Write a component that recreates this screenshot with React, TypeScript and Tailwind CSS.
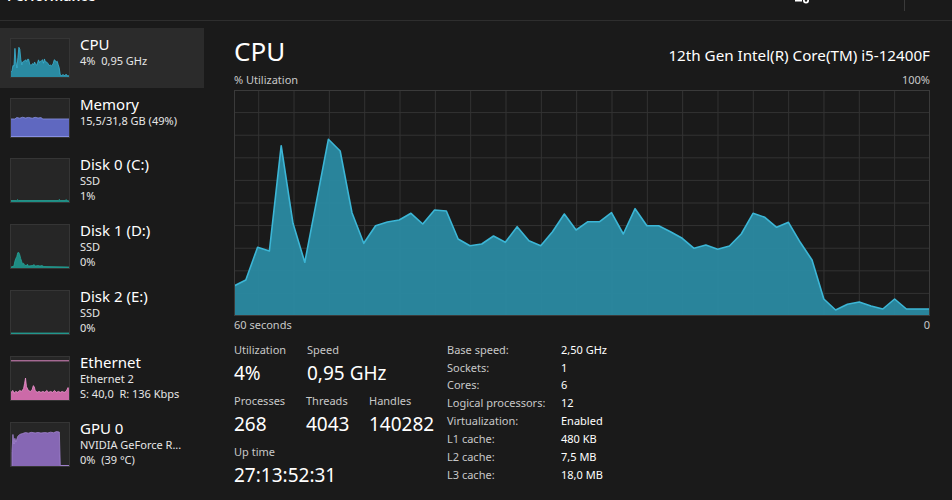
import type { ReactNode } from 'react';

const CHART_W = 696;
const CHART_H = 226;

// sampled from the screenshot, px from the chart top
const cpuSamples = [
  196, 190, 157.3, 161, 55.7, 133.3, 172.3, 110.8, 49.3, 61, 122.7, 153.3, 135.7, 132, 130, 123.3, 134, 120, 121,
  149, 155.7, 154, 146, 152.3, 136.7, 150.7, 155.7, 141.7, 124, 140, 131.7, 131.7, 122.7, 144, 118.7, 135.7, 135.7,
  141.7, 148.3, 158.3, 155, 159.3, 156, 144, 123.3, 127.3, 137.3, 132.3, 152.3, 170, 209, 220, 214.3, 212, 216, 219,
  209, 219, 219, 219,
];

function cpuPath(w: number, h: number) {
  const step = w / (cpuSamples.length - 1);
  const pts = cpuSamples.map((v, i) => `${(i * step).toFixed(2)},${((v / CHART_H) * h).toFixed(2)}`);
  return { line: pts.join(' '), area: `0,${h} ${pts.join(' ')} ${w},${h}` };
}

function CpuChart() {
  const { line, area } = cpuPath(CHART_W, CHART_H);
  const rows = Array.from({ length: 9 }, (_, i) => ((i + 1) * CHART_H) / 10);
  const cols = Array.from({ length: 19 }, (_, i) => 24.7 + i * 35.33);

  return (
    <svg width={CHART_W} height={CHART_H} viewBox={`0 0 ${CHART_W} ${CHART_H}`} className="block">
      {rows.map((y) => (
        <line key={`r${y}`} x1={0} x2={CHART_W} y1={y} y2={y} stroke="#333333" strokeWidth={1} />
      ))}
      {cols.map((x) => (
        <line key={`c${x}`} x1={x} x2={x} y1={0} y2={CHART_H} stroke="#333333" strokeWidth={1} />
      ))}
      <polygon points={area} fill="#2a8aa2" fillOpacity={0.95} />
      <polyline points={line} fill="none" stroke="#3cb6d6" strokeWidth={1.6} strokeLinejoin="round" />
      <rect x={0.5} y={0.5} width={CHART_W - 1} height={CHART_H - 1} fill="none" stroke="#3a3a3a" strokeWidth={1} />
    </svg>
  );
}

function Thumb({ h, children }: { h: number; children: ReactNode }) {
  return (
    <div className={`${h === 40 ? 'h-[40px]' : 'h-[45px]'} w-[60px] shrink-0 border border-[#353535] bg-[#262626]`}>
      <svg width="58" height={h - 2} viewBox={`0 0 60 ${h}`} preserveAspectRatio="none" className="block">
        {children}
      </svg>
    </div>
  );
}

function CpuThumb() {
  const { line, area } = cpuPath(60, 40);
  return (
    <Thumb h={40}>
      <polygon points={area} fill="#2a8aa2" />
      <polyline points={line} fill="none" stroke="#3cb6d6" strokeWidth={0.8} />
    </Thumb>
  );
}

function MemoryThumb() {
  return (
    <Thumb h={40}>
      <polygon
        points="0,40 0,21 4,21 6,19.5 9,20.2 12,19.2 15,20 18,19.4 22,20.2 25,19.3 28,20 31,19.6 33,21 60,21 60,40"
        fill="#5f68c0"
      />
      <polyline
        points="0,21 4,21 6,19.5 9,20.2 12,19.2 15,20 18,19.4 22,20.2 25,19.3 28,20 31,19.6 33,21 60,21"
        fill="none"
        stroke="#8b92e4"
        strokeWidth={0.8}
      />
      <line x1={0} x2={60} y1={39.5} y2={39.5} stroke="#8b92e4" strokeWidth={1} />
    </Thumb>
  );
}

function DiskThumb({ spikes }: { spikes: string }) {
  return (
    <Thumb h={45}>
      <polygon points={`0,45 ${spikes} 60,44 60,45`} fill="#1f8c84" />
      <polyline points={`${spikes} 60,44`} fill="none" stroke="#26a89c" strokeWidth={0.8} />
    </Thumb>
  );
}

function EthernetThumb() {
  const pts =
    '0,37 2,35 3,38 5,36 7,37 9,35 11,36 13,33 14,28 15,22 16,31 18,35 20,36 22,34 23,30 24,31 25,35 27,37 29,36 31,37 33,36 35,37 37,35 39,37 41,36 43,37 45,35 47,37 49,36 51,37 53,36 55,37 57,36 59,32 60,33';
  return (
    <Thumb h={45}>
      <line x1={0} x2={60} y1={4} y2={4} stroke="#e68bca" strokeWidth={1} />
      <polygon points={`0,45 ${pts} 60,45`} fill="#cc6aa8" />
      <polyline points={pts} fill="none" stroke="#f09ad2" strokeWidth={0.8} />
    </Thumb>
  );
}

function GpuThumb() {
  const pts =
    '1,45 1,30 2,12 3,22 4,16 5,20 7,14 9,12 12,11 15,10 18,10.6 21,9.8 25,10.4 28,9.9 31,10.5 35,10 38,10.4 41,9.6 44,10.2 47,9 50,9.5 51,45';
  return (
    <Thumb h={45}>
      <polygon points={pts} fill="#8667b4" />
      <polyline points={pts} fill="none" stroke="#a585d4" strokeWidth={0.8} />
      <line x1={51} x2={60} y1={44.5} y2={44.5} stroke="#a585d4" strokeWidth={1} />
    </Thumb>
  );
}

type SideItem = {
  title: string;
  lines: string[];
  thumb: ReactNode;
  selected?: boolean;
};

const sideItems: SideItem[] = [
  { title: 'CPU', lines: ['4%  0,95 GHz'], thumb: <CpuThumb />, selected: true },
  { title: 'Memory', lines: ['15,5/31,8 GB (49%)'], thumb: <MemoryThumb /> },
  {
    title: 'Disk 0 (C:)',
    lines: ['SSD', '1%'],
    thumb: <DiskThumb spikes="0,43.5 6,43.5 7,42.5 8,43.5 49,43.5 50,42.3 51,43.5 56,43.5 57,42.5 58,43.5" />,
  },
  {
    title: 'Disk 1 (D:)',
    lines: ['SSD', '0%'],
    thumb: (
      <DiskThumb spikes="0,44 3,43 4,38 5,35 6,33 7,29 8,28.7 9,31 10,35 11,38 12,41 13,40 14,42 16,42.5 17,41 18,43 22,42.5 24,41.5 25,43 28,42.5 30,43 32,42.5 34,43.5" />
    ),
  },
  { title: 'Disk 2 (E:)', lines: ['SSD', '0%'], thumb: <DiskThumb spikes="0,44" /> },
  { title: 'Ethernet', lines: ['Ethernet 2', 'S: 40,0  R: 136 Kbps'], thumb: <EthernetThumb /> },
  { title: 'GPU 0', lines: ['NVIDIA GeForce R...', '0%  (39 °C)'], thumb: <GpuThumb /> },
];

function Sidebar() {
  return (
    <aside className="flex w-[204px] shrink-0 flex-col pt-[7px]">
      {sideItems.map((item) => (
        <div
          key={item.title}
          className={`flex items-start pl-[10px] ${item.lines.length > 1 ? 'h-[66px]' : 'h-[60px]'} ${
            item.selected ? 'bg-[#2b2b2b]' : ''
          }`}
        >
          <div className="mt-[10px]">{item.thumb}</div>
          <div className="ml-[10px] flex flex-col pt-[7px] whitespace-pre">
            <span className="text-[15px] leading-[18px] text-white">{item.title}</span>
            {item.lines.map((l) => (
              <span key={l} className="text-[11px] leading-[15px] text-[#e6e6e6]">
                {l}
              </span>
            ))}
          </div>
        </div>
      ))}
    </aside>
  );
}

function Stat({ label, value, width }: { label: string; value: string; width: string }) {
  return (
    <div className={`flex flex-col ${width}`}>
      <span className="text-[11px] leading-[15px] text-[#c8c8c8]">{label}</span>
      <span className="mt-[4px] text-[19px] leading-[24px] text-white">{value}</span>
    </div>
  );
}

const specs: [string, string][] = [
  ['Base speed:', '2,50 GHz'],
  ['Sockets:', '1'],
  ['Cores:', '6'],
  ['Logical processors:', '12'],
  ['Virtualization:', 'Enabled'],
  ['L1 cache:', '480 KB'],
  ['L2 cache:', '7,5 MB'],
  ['L3 cache:', '18,0 MB'],
];

export default function App() {
  return (
    <div className="flex h-[500px] w-[952px] flex-col overflow-hidden bg-[#1a1a1a] font-['Noto_Sans',sans-serif] text-white">
      <header className="flex h-[21px] shrink-0 items-start overflow-hidden border-b border-[#2e2e2e]">
        <span className="ml-[7px] -mt-[13px] text-[14px] font-semibold leading-[18px]">Performance</span>
        <svg width="16" height="6" viewBox="0 0 16 6" className="ml-auto mr-[93px]">
          <rect x="0" y="0" width="7" height="1.5" fill="#ffffff" />
          <circle cx="11" cy="0.5" r="3" fill="#ffffff" />
          <circle cx="11" cy="0.5" r="1.2" fill="#1a1a1a" />
        </svg>
        <div className="h-[11px] w-px bg-[#3a3a3a]" />
        <div className="w-[47px]" />
      </header>

      <div className="flex min-h-0 flex-1">
        <Sidebar />

        <main className="flex min-w-0 flex-1 flex-col pl-[30px] pr-[22px]">
          <div className="mt-[12px] flex h-[36px] items-baseline justify-between">
            <span className="text-[26px] leading-[36px]">CPU</span>
            <span className="text-[15.2px] leading-[20px]">12th Gen Intel(R) Core(TM) i5-12400F</span>
          </div>
          <div className="mt-[3px] flex h-[16px] items-baseline justify-between text-[11px] leading-[16px] text-[#c8c8c8]">
            <span>% Utilization</span>
            <span>100%</span>
          </div>
          <div className="mt-[2px]">
            <CpuChart />
          </div>
          <div className="mt-[2px] flex justify-between text-[11px] leading-[14px] text-[#c8c8c8]">
            <span>60 seconds</span>
            <span>0</span>
          </div>

          <div className="mt-[9px] flex">
            <div className="flex w-[213px] shrink-0 flex-col gap-[8px] pt-[1px]">
              <div className="flex">
                <Stat label="Utilization" value="4%" width="w-[73px]" />
                <Stat label="Speed" value="0,95 GHz" width="w-[100px]" />
              </div>
              <div className="flex">
                <Stat label="Processes" value="268" width="w-[72px]" />
                <Stat label="Threads" value="4043" width="w-[63px]" />
                <Stat label="Handles" value="140282" width="w-[70px]" />
              </div>
              <div className="flex">
                <Stat label="Up time" value="27:13:52:31" width="w-[140px]" />
              </div>
            </div>
            <div className="flex flex-col text-[11px]">
              {specs.map(([k, v]) => (
                <div key={k} className="flex h-[17.9px] items-center">
                  <span className="w-[114px] text-[#c8c8c8]">{k}</span>
                  <span className="text-white">{v}</span>
                </div>
              ))}
            </div>
          </div>
        </main>
      </div>
    </div>
  );
}
